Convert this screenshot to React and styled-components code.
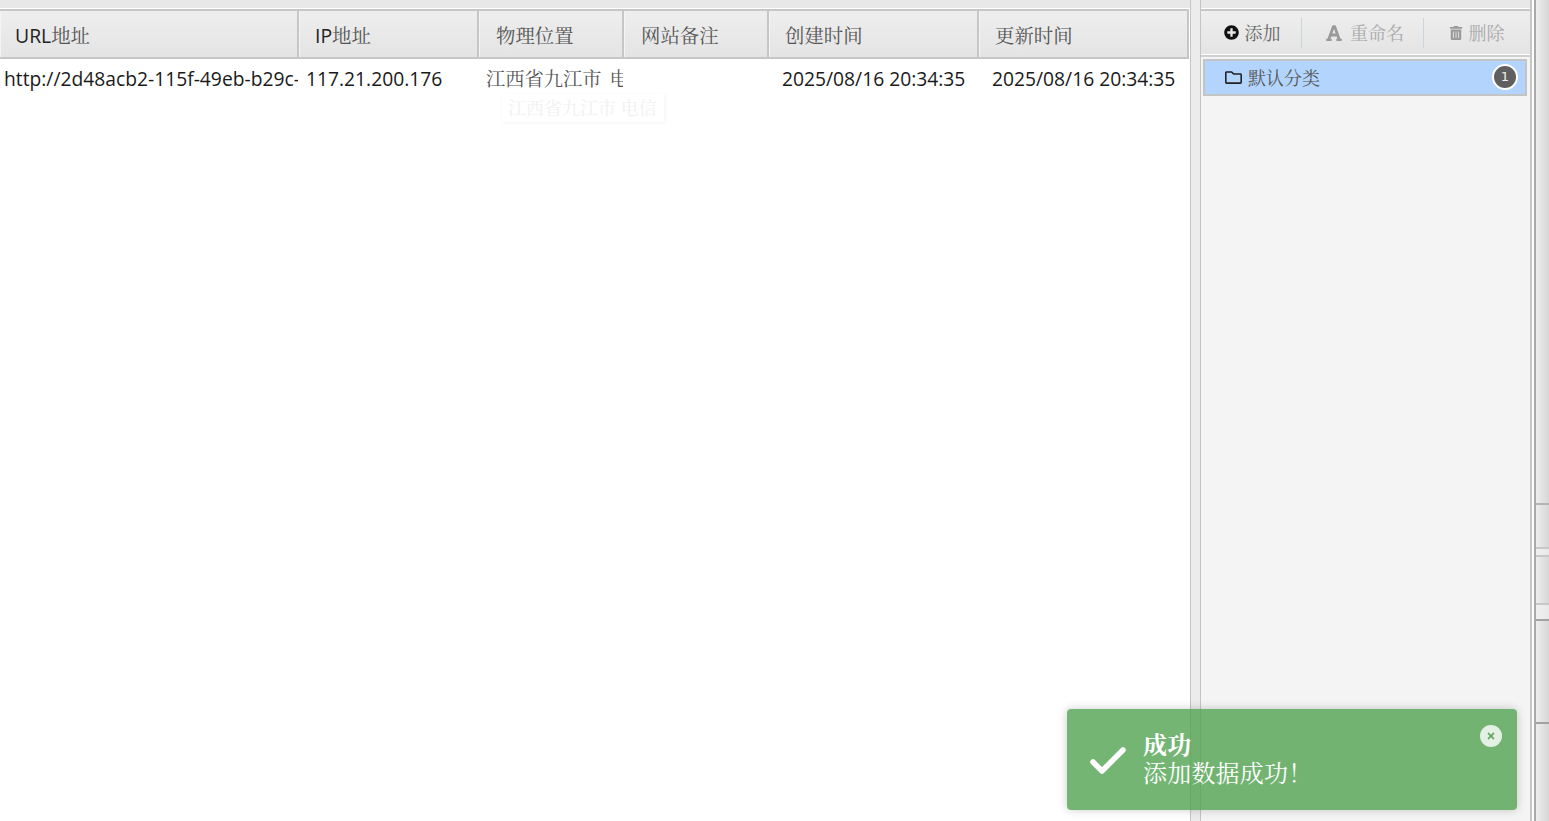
import React from 'react'
import styled, { createGlobalStyle } from 'styled-components'
import { FaPlusCircle, FaFont, FaTrashAlt, FaRegFolder, FaTimes } from 'react-icons/fa'

const FONT = `"Open Sans", "Noto Serif CJK SC", "Noto Sans CJK SC", sans-serif`

const Global = createGlobalStyle`
  html, body { margin: 0; padding: 0; height: 100%; overflow: hidden; background: #fff; }
  body { font-family: ${FONT}; }
  #root { height: 100%; }
`

const Page = styled.div`
  position: relative;
  display: flex;
  width: 1549px;
  height: 821px;
  overflow: hidden;
`

const Main = styled.div`
  width: 1190px;
  flex: none;
  display: flex;
  flex-direction: column;
`

const Splitter = styled.div`
  width: 11px;
  flex: none;
  background: #ececec;
  border-left: 1px solid #c4c4c4;
  border-right: 1px solid #c4c4c4;
  box-sizing: border-box;
`

const TopStrip = styled.div`
  height: 8px;
  background: #e8e8e8;
  border-bottom: 1px solid #fff;
  flex: none;
`

const HeaderRow = styled.div`
  display: flex;
  height: 50px;
  width: 1189px;
  flex: none;
  box-sizing: border-box;
  border-top: 2px solid #c6c6c6;
  border-bottom: 2px solid #c6c6c6;
  background: linear-gradient(#eeeeee, #e4e4e4);
`

const HeaderCell = styled.div`
  width: ${(props) => props.$w}px;
  flex: none;
  box-sizing: border-box;
  padding-left: ${(props) => props.$pad}px;
  border-right: 2px solid #c6c6c6;
  border-left: 1px solid #f4f4f4;
  font-size: 19.4px;
  line-height: 49px;
  color: #222;
  white-space: nowrap;
  overflow: hidden;
`

const Han = styled.span`
  color: #555;
`

const BodyRow = styled.div`
  display: flex;
  height: 40px;
  flex: none;
`

const BodyCell = styled.div`
  width: ${(props) => props.$w}px;
  flex: none;
  box-sizing: border-box;
  padding-left: ${(props) => props.$pad}px;
  font-size: 19.25px;
  line-height: 40px;
  color: ${(props) => (props.$han ? '#555' : '#1a1a1a')};
  word-spacing: ${(props) => (props.$han ? '3px' : '0')};
  white-space: nowrap;
  overflow: hidden;
`

const Ghost = styled.div`
  position: absolute;
  left: 502px;
  top: 94px;
  width: 162px;
  height: 28px;
  box-sizing: border-box;
  padding-left: 6px;
  font-size: 18px;
  line-height: 28px;
  color: #f1f1f1;
  background: #fff;
  box-shadow: 1px 1px 4px rgba(0, 0, 0, 0.05);
  white-space: nowrap;
`

const Sidebar = styled.div`
  width: 331px;
  flex: none;
  box-sizing: border-box;
  background: #f4f4f4;
  border-right: 2px solid #c6c6c6;
  display: flex;
  flex-direction: column;
`

const Toolbar = styled.div`
  height: 46px;
  flex: none;
  box-sizing: border-box;
  display: flex;
  align-items: center;
  background: linear-gradient(#eeeeee, #e4e4e4);
  border-top: 2px solid #c6c6c6;
  border-bottom: 1px solid #fff;
`

const ToolButton = styled.div`
  width: ${(props) => props.$w}px;
  flex: none;
  box-sizing: border-box;
  padding-left: ${(props) => props.$shift || 0}px;
  display: flex;
  align-items: center;
  justify-content: center;
  gap: ${(props) => props.$gap}px;
  font-size: 18px;
  line-height: 24px;
  color: ${(props) => (props.$off ? '#aaa' : '#666')};
  svg { color: ${(props) => (props.$off ? '#9a9a9a' : '#111')}; }
`

const ToolDivider = styled.div`
  width: 1px;
  height: 30px;
  flex: none;
  background: #c9d6dc;
`

const CategoryList = styled.div`
  padding: 2px 3px 0 2px;
  border-top: 2px solid #d0d0d0;
`

const Category = styled.div`
  height: 37px;
  box-sizing: border-box;
  border: 2px solid #c4c4c4;
  background: #b3d4fc;
  display: flex;
  align-items: center;
  padding: 0 7px 1px 20px;
  font-size: 18px;
  color: #555;
  gap: 6px;
  svg { color: #222; }
`

const CategoryName = styled.span`
  flex: 1;
`

const Badge = styled.span`
  width: 26px;
  height: 26px;
  box-sizing: border-box;
  border: 2px solid #fff;
  border-radius: 50%;
  background: #5f5f5f;
  color: #eee;
  font-family: "DejaVu Sans", sans-serif;
  font-size: 13px;
  text-align: center;
  line-height: 22px;
`

const Rail = styled.div`
  flex: 1;
  margin-left: 2px;
  display: flex;
  flex-direction: column;
  border-left: 2px solid #aaa;
`

const RailPart = styled.div`
  height: ${(props) => props.$h}px;
  box-sizing: border-box;
  background: ${(props) => (props.$light ? 'linear-gradient(90deg, #f0f0f0, #e8e8e8)' : 'linear-gradient(90deg, #eeeeee, #d6d6d6)')};
  border-top: ${(props) => (props.$line ? `2px solid ${props.$line}` : 'none')};
`

const Toast = styled.div`
  position: absolute;
  left: 1067px;
  top: 709px;
  width: 450px;
  height: 101px;
  border-radius: 4px;
  background: rgba(81, 163, 81, 0.8);
  box-shadow: 0 0 10px rgba(0, 0, 0, 0.2);
  display: flex;
  align-items: center;
  color: #fff;
`

const ToastIcon = styled.div`
  width: 76px;
  flex: none;
  box-sizing: border-box;
  display: flex;
  justify-content: center;
  padding: 2px 0 0 6px;
  line-height: 0;
`

const ToastText = styled.div`
  font-size: 24px;
  line-height: 28px;
  letter-spacing: 0.2px;
  margin-top: -2px;
`

const ToastTitle = styled.div`
  font-weight: 700;
`

const ToastClose = styled.div`
  position: absolute;
  right: 15px;
  top: 16px;
  width: 22px;
  height: 22px;
  border-radius: 50%;
  background: rgba(255, 255, 255, 0.8);
  color: #62aa62;
  display: flex;
  align-items: center;
  justify-content: center;
  font-size: 10px;
`

const columns = [
  { latin: 'URL', han: '地址', w: 299, pad: 14 },
  { latin: 'IP', han: '地址', w: 180, pad: 15 },
  { han: '物理位置', w: 145, pad: 16 },
  { han: '网站备注', w: 145, pad: 16 },
  { han: '创建时间', w: 210, pad: 15 },
  { han: '更新时间', w: 210, pad: 15 },
]

const cells = [
  { text: 'http://2d48acb2-115f-49eb-b29c-3a1f', w: 298, pad: 4 },
  { text: '117.21.200.176', w: 180, pad: 8 },
  { text: '江西省九江市 电信', w: 145, pad: 8, han: true },
  { text: '', w: 145, pad: 8 },
  { text: '2025/08/16 20:34:35', w: 210, pad: 14 },
  { text: '2025/08/16 20:34:35', w: 212, pad: 14 },
]

const railParts = [
  { h: 503 },
  { h: 44, line: '#b4b4b4' },
  { h: 8, line: '#c8c8c8', light: true },
  { h: 48, line: '#c8c8c8' },
  { h: 16, line: '#c8c8c8', light: true },
  { h: 103, line: '#a2a2a2' },
  { h: 99, line: '#a2a2a2' },
]

const App = () => {
  return (
    <Page>
      <Global />
      <Main>
        <TopStrip />
        <HeaderRow>
          {columns.map((c) => (
            <HeaderCell key={c.han + c.w + c.pad} $w={c.w} $pad={c.pad}>
              {c.latin}<Han>{c.han}</Han>
            </HeaderCell>
          ))}
        </HeaderRow>
        <BodyRow>
          {cells.map((c, i) => (
            <BodyCell key={i} $w={c.w} $pad={c.pad} $han={c.han}>{c.text}</BodyCell>
          ))}
        </BodyRow>
      </Main>
      <Splitter />
      <Sidebar>
        <TopStrip />
        <Toolbar>
          <ToolButton $w={100} $gap={6} $shift={2}><FaPlusCircle size={15} />添加</ToolButton>
          <ToolDivider />
          <ToolButton $w={121} $gap={7} $shift={4} $off><FaFont size={18} />重命名</ToolButton>
          <ToolDivider />
          <ToolButton $w={105} $gap={6} $off><FaTrashAlt size={14} />删除</ToolButton>
        </Toolbar>
        <CategoryList>
          <Category>
            <FaRegFolder size={17} />
            <CategoryName>默认分类</CategoryName>
            <Badge>1</Badge>
          </Category>
        </CategoryList>
      </Sidebar>
      <Rail>
        {railParts.map((p, i) => (
          <RailPart key={i} $h={p.h} $line={p.line} $light={p.light} />
        ))}
      </Rail>
      <Ghost>江西省九江市 电信</Ghost>
      <Toast>
        <ToastIcon>
          <svg width="40" height="32" viewBox="0 0 40 32">
            <polyline points="5,17 14,26 35,5" fill="none" stroke="#fff" strokeWidth="5.5" strokeLinecap="round" strokeLinejoin="round" />
          </svg>
        </ToastIcon>
        <ToastText>
          <ToastTitle>成功</ToastTitle>
          添加数据成功！
        </ToastText>
        <ToastClose><FaTimes /></ToastClose>
      </Toast>
    </Page>
  )
}

export default App
